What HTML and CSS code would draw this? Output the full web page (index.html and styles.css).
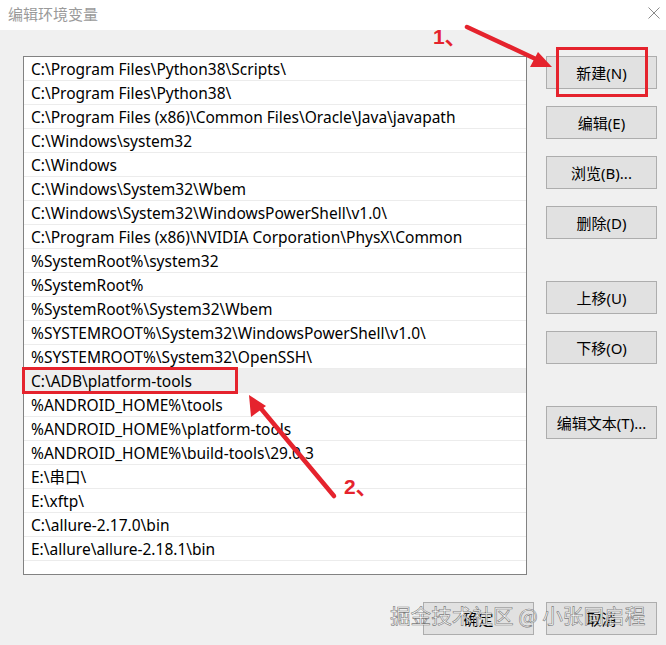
FILE: index.html
```html
<!DOCTYPE html>
<html lang="zh-CN">
<head>
    <meta charset="UTF-8">
    <meta name="viewport" content="width=device-width, initial-scale=1.0">
    <title>编辑环境变量</title>
    <link rel="stylesheet" href="styles.css">
</head>
<body>

    <div class="dialog">
        <div class="titlebar">
            <span class="title">编辑环境变量</span>
            <svg class="close" width="12" height="12" viewBox="0 0 12 12">
                <path d="M0.5 0.5 L11.5 11.5 M11.5 0.5 L0.5 11.5" stroke="#8a8a8a" stroke-width="1" fill="none"/>
            </svg>
        </div>

        <div class="content">
            <ul class="path-list">
                <li>C:\Program Files\Python38\Scripts\</li>
                <li>C:\Program Files\Python38\</li>
                <li>C:\Program Files (x86)\Common Files\Oracle\Java\javapath</li>
                <li>C:\Windows\system32</li>
                <li>C:\Windows</li>
                <li>C:\Windows\System32\Wbem</li>
                <li>C:\Windows\System32\WindowsPowerShell\v1.0\</li>
                <li>C:\Program Files (x86)\NVIDIA Corporation\PhysX\Common</li>
                <li>%SystemRoot%\system32</li>
                <li>%SystemRoot%</li>
                <li>%SystemRoot%\System32\Wbem</li>
                <li>%SYSTEMROOT%\System32\WindowsPowerShell\v1.0\</li>
                <li>%SYSTEMROOT%\System32\OpenSSH\</li>
                <li class="selected">C:\ADB\platform-tools</li>
                <li>%ANDROID_HOME%\tools</li>
                <li>%ANDROID_HOME%\platform-tools</li>
                <li>%ANDROID_HOME%\build-tools\29.0.3</li>
                <li>E:\串口\</li>
                <li>E:\xftp\</li>
                <li>C:\allure-2.17.0\bin</li>
                <li>E:\allure\allure-2.18.1\bin</li>
            </ul>

            <div class="actions">
                <button class="btn">新建(N)</button>
                <button class="btn">编辑(E)</button>
                <button class="btn">浏览(B)...</button>
                <button class="btn">删除(D)</button>
                <button class="btn group-start">上移(U)</button>
                <button class="btn">下移(O)</button>
                <button class="btn group-start">编辑文本(T)...</button>
            </div>
        </div>

        <div class="footer">
            <button class="btn">确定</button>
            <button class="btn">取消</button>
        </div>
    </div>

    <!-- red annotations drawn over the dialog -->
    <div class="mark mark-new"></div>
    <div class="mark mark-adb"></div>
    <span class="step step-1">1、</span>
    <span class="step step-2">2、</span>
    <svg class="arrows" width="666" height="645" viewBox="0 0 666 645">
        <g stroke="#e5232d" stroke-width="4.5" stroke-linecap="round" fill="none">
            <line x1="467" y1="27" x2="540" y2="61"/>
            <line x1="334" y1="496" x2="258" y2="405"/>
        </g>
        <g fill="#e5232d">
            <polygon points="552,67 530,67 538,52"/>
            <polygon points="249,395 251,417 266,406"/>
        </g>
    </svg>

    <div class="watermark">掘金技术社区 @ 小张同启程</div>

</body>
</html>
```

FILE: styles.css
```css
* {
    margin: 0;
    padding: 0;
    box-sizing: border-box;
}

body {
    width: 666px;
    height: 645px;
    overflow: hidden;
    position: relative;
    background-color: #f0f0f0;
    font-family: "Noto Sans", "Noto Sans CJK SC", sans-serif;
    font-size: 15px;
    color: #000;
}

.dialog {
    display: flex;
    flex-direction: column;
    height: 100%;
}

.titlebar {
    height: 30px;
    background-color: #fff;
    display: flex;
    align-items: center;
    justify-content: space-between;
    padding: 0 6px 4px 8px;
}

.title {
    font-family: "Noto Sans CJK SC", sans-serif;
    font-size: 15px;
    color: #9a9a9a;
}

.content {
    display: flex;
    gap: 19px;
    padding: 26px 0 0 23px;
}

.path-list {
    list-style: none;
    width: 504px;
    height: 519px;
    border: 1px solid #828282;
    background-color: #fff;
}

.path-list li {
    height: 24px;
    line-height: 25px;
    padding-left: 7px;
    border-bottom: 1px solid #ececec;
    font-size: 15.5px;
    white-space: nowrap;
}

.path-list li.selected {
    background-color: #eeeeee;
}

.actions {
    display: flex;
    flex-direction: column;
    gap: 17px;
}

.btn {
    width: 111px;
    height: 33px;
    background-color: #e1e1e1;
    border: 1px solid #adadad;
    font-family: "Noto Sans", "Noto Sans CJK SC", sans-serif;
    font-size: 15px;
    color: #000;
}

.group-start {
    margin-top: 25px;
}

.footer {
    display: flex;
    justify-content: flex-end;
    gap: 12px;
    padding: 27px 9px 0 0;
}

.mark {
    position: absolute;
    border: 3px solid #e5232d;
}

.mark-new {
    left: 556px;
    top: 47px;
    width: 92px;
    height: 50px;
}

.mark-adb {
    left: 22px;
    top: 367px;
    width: 216px;
    height: 27px;
}

.step {
    position: absolute;
    font-family: "Liberation Sans", sans-serif;
    font-weight: bold;
    font-size: 21px;
    color: #e5232d;
}

.step-1 {
    left: 433px;
    top: 20px;
}

.step-2 {
    left: 344px;
    top: 470px;
}

.arrows {
    position: absolute;
    left: 0;
    top: 0;
}

.watermark {
    position: absolute;
    left: 390px;
    top: 600px;
    font-family: "Noto Sans CJK SC", sans-serif;
    font-size: 20.6px;
    color: rgba(255, 255, 255, 0.85);
    -webkit-text-stroke: 0.6px rgba(100, 100, 100, 0.85);
    white-space: nowrap;
}
```
